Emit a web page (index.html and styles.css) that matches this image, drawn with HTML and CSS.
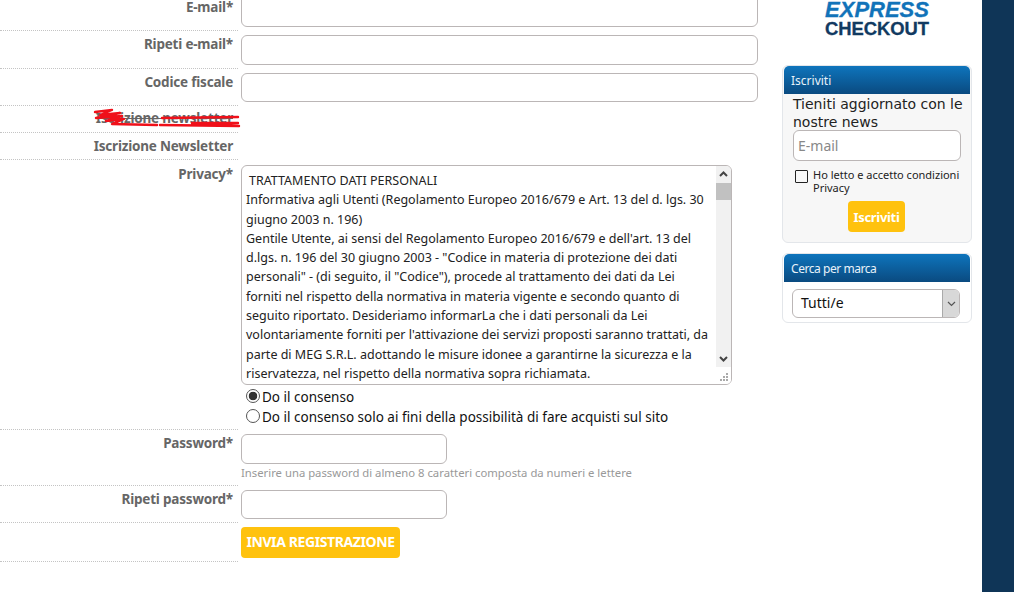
FILE: index.html
```html
<!DOCTYPE html>
<html lang="en">
<head>
    <meta charset="UTF-8">
    <meta name="viewport" content="width=device-width, initial-scale=1.0">
    <title>Registrazione</title>
    <link rel="stylesheet" href="styles.css">
</head>
<body>
    <div class="page">
        <form class="form">
            <div class="row row-email">
                <label class="label">E-mail*</label>
                <div class="field"><input class="input input-wide" type="text"></div>
            </div>
            <div class="row row-repeat">
                <label class="label">Ripeti e-mail*</label>
                <div class="field"><input class="input input-wide" type="text"></div>
            </div>
            <div class="row row-code">
                <label class="label">Codice fiscale</label>
                <div class="field"><input class="input input-wide" type="text"></div>
            </div>
            <div class="row row-struck">
                <label class="label struck">Iscrizione newsletter</label>
                <svg class="scribble" width="150" height="24" viewBox="0 0 150 24">
                    <path d="M3 5 L20 3 L8 8 L28 6 L4 11 L30 9 L14 14 L32 12 L20 17 L65 18 M70 11 L146 10 M68 18 L147 19 L100 16 L146 16" fill="none" stroke="#f0101a" stroke-width="2.4" stroke-linecap="round" stroke-linejoin="round"/>
                </svg>
            </div>
            <div class="row row-news">
                <label class="label">Iscrizione Newsletter</label>
            </div>
            <div class="row row-privacy">
                <label class="label">Privacy*</label>
                <div class="field">
                    <div class="terms">
                        <div class="terms-text">
                            <div class="terms-first">TRATTAMENTO DATI PERSONALI</div>
                            <div>Informativa agli Utenti (Regolamento Europeo 2016/679 e Art. 13 del d. lgs. 30</div>
                            <div>giugno 2003 n. 196)</div>
                            <div>Gentile Utente, ai sensi del Regolamento Europeo 2016/679 e dell'art. 13 del</div>
                            <div>d.lgs. n. 196 del 30 giugno 2003 - "Codice in materia di protezione dei dati</div>
                            <div>personali" - (di seguito, il "Codice"), procede al trattamento dei dati da Lei</div>
                            <div>forniti nel rispetto della normativa in materia vigente e secondo quanto di</div>
                            <div>seguito riportato. Desideriamo informarLa che i dati personali da Lei</div>
                            <div>volontariamente forniti per l'attivazione dei servizi proposti saranno trattati, da</div>
                            <div>parte di MEG S.R.L. adottando le misure idonee a garantirne la sicurezza e la</div>
                            <div>riservatezza, nel rispetto della normativa sopra richiamata.</div>
                        </div>
                        <div class="scrollbar">
                            <svg class="arrow" width="15" height="17" viewBox="0 0 15 17"><path d="M4 10 L7.5 6.5 L11 10" fill="none" stroke="#444" stroke-width="2"/></svg>
                            <div class="thumb"></div>
                            <div class="track"></div>
                            <svg class="arrow" width="15" height="17" viewBox="0 0 15 17"><path d="M4 7 L7.5 10.5 L11 7" fill="none" stroke="#444" stroke-width="2"/></svg>
                            <svg class="grip" width="15" height="17" viewBox="0 0 15 17" fill="#aaa">
                                <rect x="10" y="6" width="2" height="2"/><rect x="7" y="9" width="2" height="2"/><rect x="10" y="9" width="2" height="2"/><rect x="4" y="12" width="2" height="2"/><rect x="7" y="12" width="2" height="2"/><rect x="10" y="12" width="2" height="2"/>
                            </svg>
                        </div>
                    </div>
                    <div class="choice"><span class="radio radio-on"></span>Do il consenso</div>
                    <div class="choice"><span class="radio"></span>Do il consenso solo ai fini della possibilità di fare acquisti sul sito</div>
                </div>
            </div>
            <div class="row row-pass">
                <label class="label">Password*</label>
                <div class="field">
                    <input class="input input-short" type="password">
                    <div class="hint">Inserire una password di almeno 8 caratteri composta da numeri e lettere</div>
                </div>
            </div>
            <div class="row row-pass2">
                <label class="label">Ripeti password*</label>
                <div class="field"><input class="input input-short" type="password"></div>
            </div>
            <div class="row row-send">
                <div class="label"></div>
                <div class="field"><button class="send" type="button">INVIA REGISTRAZIONE</button></div>
            </div>
        </form>
        <aside class="side">
            <div class="logo">
                <div class="logo-top">EXPRESS</div>
                <div class="logo-bottom">CHECKOUT</div>
            </div>
            <div class="box box-news">
                <div class="box-head">Iscriviti</div>
                <div class="box-body">
                    <div class="news-text">Tieniti aggiornato con le nostre news</div>
                    <input class="input news-input" type="text" placeholder="E-mail">
                    <div class="accept">
                        <span class="check"></span>
                        <span>Ho letto e accetto condizioni Privacy</span>
                    </div>
                    <button class="join" type="button">Iscriviti</button>
                </div>
            </div>
            <div class="box box-brand">
                <div class="box-head">Cerca per marca</div>
                <div class="box-body brand-body">
                    <div class="select">
                        <span class="select-value">Tutti/e</span>
                        <span class="select-btn">
                            <svg width="9" height="6" viewBox="0 0 9 6"><path d="M1 1 L4.5 4.5 L8 1" fill="none" stroke="#555" stroke-width="1.2"/></svg>
                        </span>
                    </div>
                </div>
            </div>
        </aside>
        <div class="strip"></div>
    </div>
</body>
</html>
```

FILE: styles.css
```css
html, body {
    margin: 0;
    padding: 0;
    height: 592px;
    overflow: hidden;
    background: white;
}
body {
    font-family: "Noto Sans", Arial, sans-serif;
    font-size: 14px;
    color: #111;
}
.page {
    display: flex;
    height: 592px;
}
.form {
    width: 782px;
    flex-shrink: 0;
    margin-top: -8px;
}
.row {
    display: flex;
    position: relative;
    box-sizing: border-box;
}
.row::after {
    content: "";
    position: absolute;
    left: 0;
    bottom: 0;
    width: 238px;
    border-bottom: 1px dotted #c4c4c4;
}
.label {
    width: 233px;
    margin-right: 8px;
    flex-shrink: 0;
    text-align: right;
    font-size: 13.5px;
    font-weight: 700;
    color: #666;
    line-height: 18px;
    letter-spacing: -0.2px;
}
.field {
    flex: 1;
}
.input {
    display: block;
    box-sizing: border-box;
    border: 1px solid #bbb6b6;
    border-radius: 6px;
    background: white;
    font-family: inherit;
    padding: 0 4px;
    margin: 0;
}
.input-wide {
    width: 517px;
    height: 30px;
    margin-right: 24px;
}
.input-short {
    width: 206px;
    height: 30px;
}
.row-email {
    height: 39px;
}
.row-email .input-wide {
    height: 35px;
}
.row-email .label {
    padding-top: 6px;
}
.row-repeat {
    height: 38px;
    padding-top: 4px;
}
.row-code {
    height: 37px;
    padding-top: 4px;
}
.row-code .input-wide {
    height: 29px;
}
.row-struck {
    height: 27px;
}
.row-struck .label {
    padding-top: 3px;
}
.struck {
    text-decoration: line-through;
}
.scribble {
    position: absolute;
    left: 92px;
    top: 1px;
}
.row-news {
    height: 27px;
}
.row-news .label {
    padding-top: 4px;
}
.row-privacy {
    height: 270px;
    padding-top: 5px;
}
.terms {
    display: flex;
    width: 491px;
    height: 220px;
    box-sizing: border-box;
    border: 1px solid #bbb6b6;
    border-radius: 6px;
    overflow: hidden;
}
.terms-text {
    flex: 1;
    padding: 5px 0 0 4px;
    font-size: 12.5px;
    line-height: 19.3px;
    white-space: nowrap;
    overflow: hidden;
    color: #222;
}
.terms-first {
    padding-left: 3px;
}
.scrollbar {
    width: 15px;
    display: flex;
    flex-direction: column;
    flex-shrink: 0;
    background: #f1f1f1;
}
.arrow {
    display: block;
    flex-shrink: 0;
}
.thumb {
    height: 17px;
    background: #c1c1c1;
}
.track {
    flex: 1;
}
.grip {
    display: block;
    background: white;
    flex-shrink: 0;
}
.choice {
    display: flex;
    align-items: center;
    height: 20px;
    padding-left: 5px;
    font-size: 13.5px;
}
.terms + .choice {
    margin-top: 2px;
}
.radio {
    box-sizing: border-box;
    width: 14px;
    height: 14px;
    border: 1px solid #555;
    border-radius: 50%;
    margin-right: 2px;
    margin-top: -2px;
    background: white;
}
.radio-on {
    background: radial-gradient(circle, #333 0, #333 4px, white 4.6px);
}
.row-pass {
    height: 56px;
    padding-top: 4px;
}
.hint {
    font-size: 11.3px;
    color: #999;
    line-height: 16px;
    margin-top: 1px;
}
.row-pass2 {
    height: 37px;
    padding-top: 4px;
}
.row-pass2 .input-short {
    height: 29px;
}
.row-send {
    height: 39px;
    padding-top: 4px;
}
.send {
    display: block;
    width: 159px;
    height: 31px;
    border: none;
    border-radius: 4px;
    background: #ffc20e;
    color: white;
    font-family: inherit;
    font-size: 14px;
    font-weight: 700;
    letter-spacing: -0.4px;
    padding: 0 0 2px;
}
.side {
    width: 190px;
    flex-shrink: 0;
}
.logo {
    height: 65px;
    text-align: center;
    font-family: "Liberation Sans", Arial, sans-serif;
    font-weight: 700;
    line-height: 19px;
    -webkit-text-stroke: 0.3px;
}
.logo-top {
    color: #1173b9;
    font-style: italic;
    font-size: 22px;
}
.logo-bottom {
    color: #113a61;
    font-size: 18.4px;
}
.box {
    box-sizing: border-box;
    border: 1px solid #e3e6ea;
    border-radius: 6px;
    background: white;
    overflow: hidden;
}
.box-head {
    height: 28px;
    margin: 0 1px;
    padding-left: 7px;
    border-radius: 5px 5px 0 0;
    background: linear-gradient(#0e74bc, #0a4a80);
    color: #e8f2fa;
    font-size: 12px;
    line-height: 30px;
}
.box-news {
    height: 178px;
    background: #f7f7f7;
}
.box-body {
    padding: 1px 6px 0 10px;
}
.news-text {
    font-family: "DejaVu Sans", Verdana, sans-serif;
    font-size: 14px;
    line-height: 18px;
    color: #222;
}
.news-input {
    width: 168px;
    height: 31px;
    margin-top: -1px;
    font-size: 14px;
}
.news-input::placeholder {
    color: #888;
}
.accept {
    display: flex;
    margin-top: 7px;
    font-size: 11px;
    line-height: 13px;
    color: #222;
}
.check {
    box-sizing: border-box;
    width: 13px;
    height: 13px;
    border: 1px solid #222;
    border-radius: 1px;
    margin: 2px 5px 0 2px;
    flex-shrink: 0;
}
.join {
    display: block;
    width: 57px;
    height: 31px;
    margin: 7px 0 0 55px;
    border: none;
    border-radius: 4px;
    background: #ffc20e;
    color: white;
    font-family: inherit;
    font-size: 13px;
    font-weight: 700;
    letter-spacing: -0.3px;
    padding: 0;
}
.box-brand {
    height: 70px;
    margin-top: 10px;
}
.box-brand .box-head {
    letter-spacing: -0.45px;
}
.brand-body {
    padding: 7px 10px 0 9px;
}
.select {
    display: flex;
    box-sizing: border-box;
    width: 168px;
    height: 29px;
    border: 1px solid #bbb6b6;
    border-radius: 6px;
    overflow: hidden;
    background: white;
}
.select-value {
    flex: 1;
    padding-left: 8px;
    font-size: 14px;
    line-height: 26px;
}
.select-btn {
    display: flex;
    align-items: center;
    justify-content: center;
    width: 16px;
    background: #d8d8d8;
    border-left: 1px solid #aaa;
}
.strip {
    width: 32px;
    margin-left: 10px;
    flex-shrink: 0;
    background: #0f3557;
}
```
